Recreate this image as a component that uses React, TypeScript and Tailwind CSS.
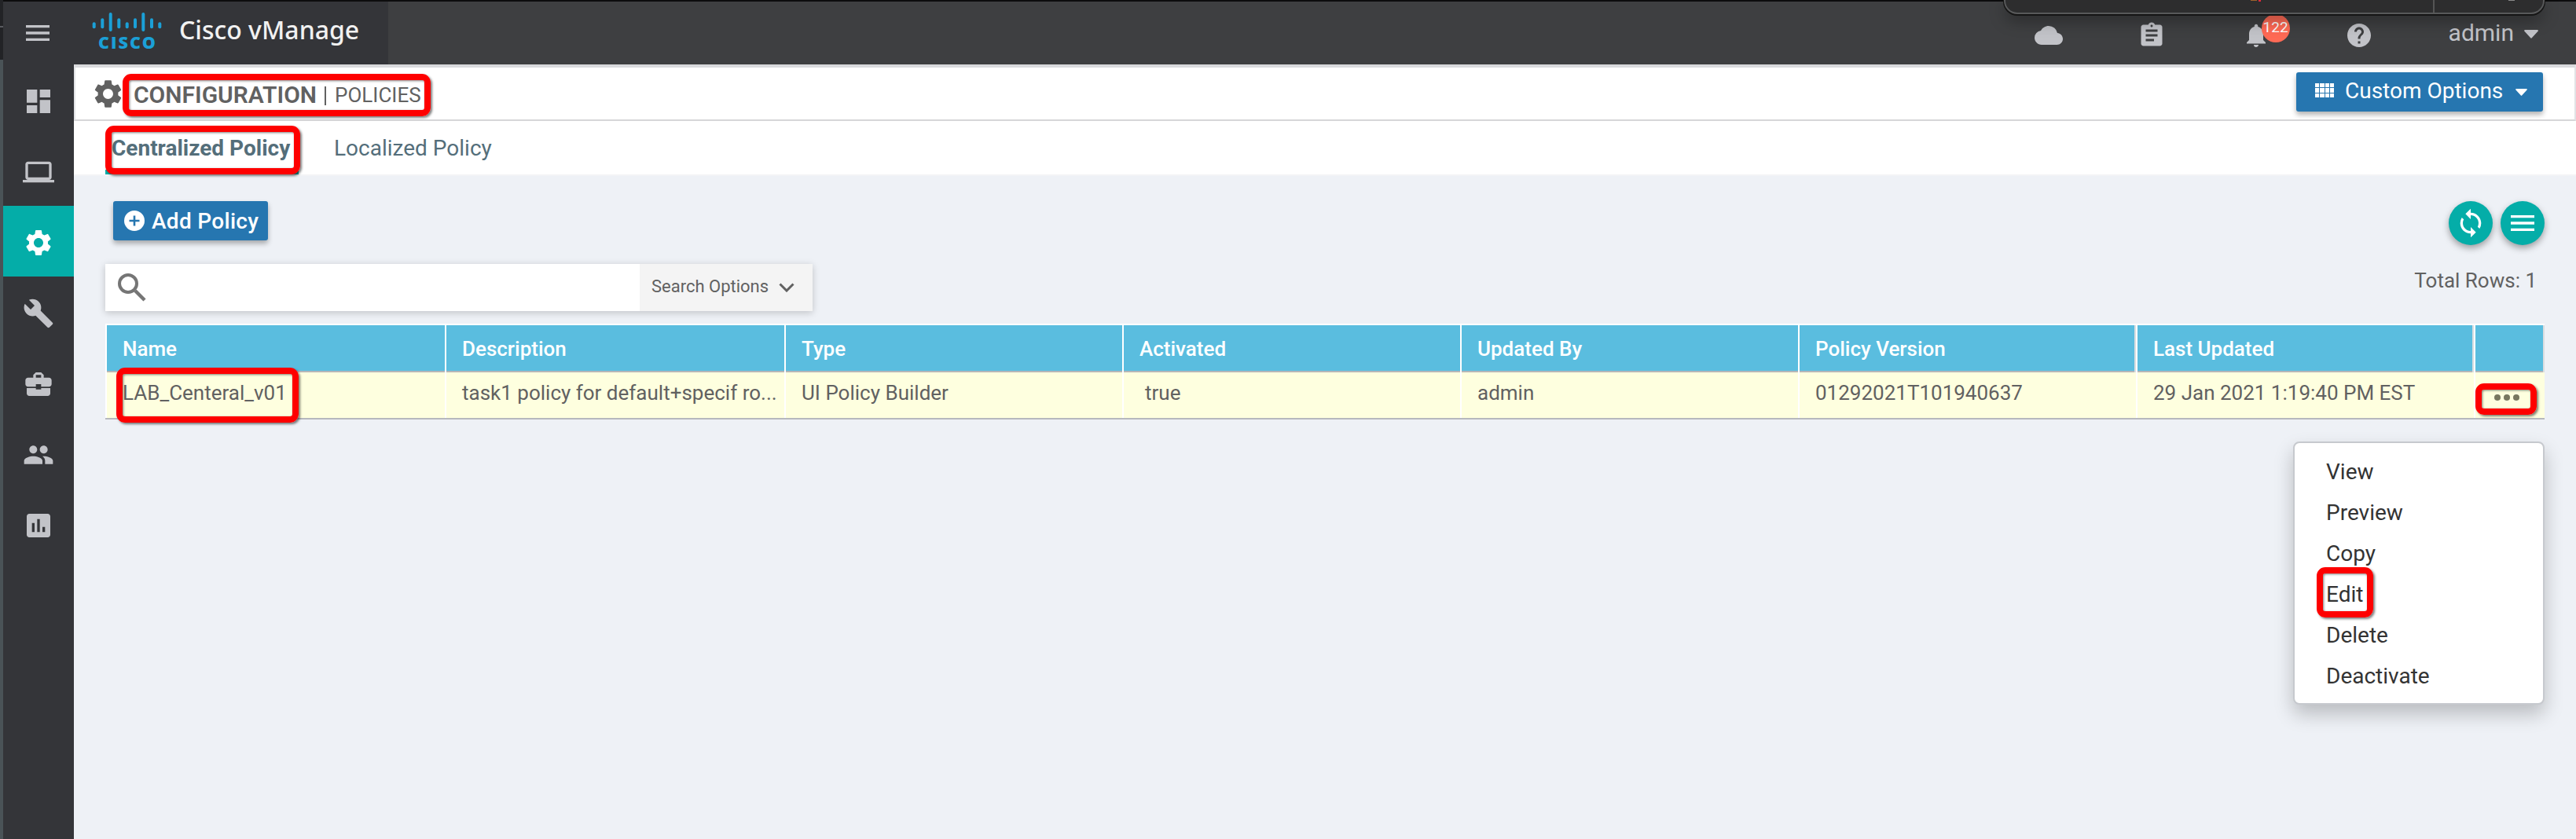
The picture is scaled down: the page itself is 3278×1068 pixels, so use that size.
import React from "react";
import {
  MdMenu, MdDashboard, MdLaptop, MdSettings, MdBuild, MdBusinessCenter, MdPeople, MdAssessment,
  MdCloud, MdAssignment, MdNotifications, MdHelp, MdSync,
} from "react-icons/md";

const Mark = ({ className }: { className: string }) => (
  <div className={"pointer-events-none absolute rounded-[11px] border-8 border-[#fe0000] shadow-[2px_2px_3px_rgba(0,0,0,0.5),inset_1px_1px_3px_rgba(0,0,0,0.5)] " + className} />
);

const Caret = ({ className }: { className: string }) => (
  <svg viewBox="0 0 18 11" className={className} fill="currentColor"><path d="M1 0h16q1.500 .5 .6 1.800L10 10q-1 1.300-2 0L.4 1.800Q-.5 .5 1 0z" /></svg>
);

// x, top and bottom of each bar in the logo
const bars = [
  [1.7, 16.3, 20.3], [12.3, 11.3, 20.3], [22.7, 4, 24], [33.3, 11.3, 20.3], [43.7, 16.3, 20.3],
  [54, 11.3, 20.3], [64.3, 4, 24], [75, 11.3, 20.3], [85.3, 16.3, 20.3],
];

const nav = [MdDashboard, MdLaptop, MdSettings, MdBuild, MdBusinessCenter, MdPeople, MdAssessment];

const columns = [
  { title: "Name", value: "LAB_Centeral_v01" },
  { title: "Description", value: "task1 policy for default+specif ro..." },
  { title: "Type", value: "UI Policy Builder" },
  { title: "Activated", value: "true" },
  { title: "Updated By", value: "admin" },
  { title: "Policy Version", value: "01292021T101940637" },
  { title: "Last Updated", value: "29 Jan 2021 1:19:40 PM EST" },
];

const actions = ["View", "Preview", "Copy", "Edit", "Delete", "Deactivate"];

function Logo() {
  return (
    <svg viewBox="0 0 88 60" className="h-[60px] w-[88px] shrink-0 overflow-visible">
      <g stroke="#1ba0d7" strokeWidth="4" strokeLinecap="round">
        {bars.map(([x, a, b]) => <line key={x} x1={x} x2={x} y1={a} y2={b} />)}
      </g>
      <text x="7" y="47.700" textLength="73" fontSize="21.500" fontWeight="800" fontFamily="'Open Sans', sans-serif" fill="#1ba0d7">CISCO</text>
    </svg>
  );
}

export default function App() {
  return (
    <div className="relative flex h-[1068px] w-[3278px] overflow-hidden bg-[#eef1f6] font-['Roboto',sans-serif] text-[#616161]">
      <div className="flex w-1 shrink-0 flex-col bg-[#4a5357]">
        <div className="h-[33px] bg-[#222326]" />
        <div className="h-[2px] bg-[#5a5c60]" />
        <div className="h-[41px] bg-[#222326]" />
      </div>
      <aside className="flex w-[90px] shrink-0 flex-col border-t-2 border-[#0c0c0d] bg-[#343539] text-[#c2c3c8]">
        <div className="flex h-20 items-center justify-center pr-[2px]"><MdMenu className="size-10" /></div>
        {nav.map((Icon, i) => (
          <div key={i} className={i === 2 ? "flex h-[90px] items-center justify-center bg-[#04ada8] pt-1 text-white" : "flex h-[90px] items-center justify-center pt-1"}>
            <Icon className="size-10" />
          </div>
        ))}
      </aside>

      <div className="flex min-w-0 flex-1 flex-col">
        <header className="flex h-[82px] shrink-0 border-t-2 border-[#0c0c0d] bg-[#3e3f41] text-[#c2c3c8]">
          <div className="flex w-[400px] items-start bg-[#343539] pl-6 pt-3">
            <Logo />
            <span className="ml-[22px] whitespace-nowrap font-['Noto_Sans',sans-serif] text-[32px] font-medium leading-[48px] text-[#f1f1f1]">Cisco vManage</span>
          </div>
          <div className="flex flex-1 items-center justify-end pr-[48px] pt-[6px]">
            <MdCloud className="mr-[95px] size-9" />
            <MdAssignment className="mr-[97px] size-9" />
            <div className="relative mr-[95px]">
              <MdNotifications className="size-9" />
              <span className="absolute left-[25px] top-[-9px] flex size-9 items-center justify-center rounded-full bg-[#ff6a55] pb-[2px] text-[19px] text-white">122</span>
            </div>
            <MdHelp className="mr-[96px] size-9" />
            <span className="relative -top-[3px] text-[30px] leading-9">admin</span>
            <Caret className="relative -top-[2px] ml-[13px] h-[11px] w-[18px]" />
          </div>
        </header>

        <section className="flex h-[72px] shrink-0 items-start justify-between border-x-2 border-b-2 border-t-4 border-x-[#e2e3e6] border-b-[#d6d6d8] border-t-[#d9dadd] bg-white pl-5 pr-10">
          <div className="flex h-[66px] items-center">
            <MdSettings className="size-[43px]" />
            <span className="ml-[11px] pt-[2px] text-[30px] font-semibold">CONFIGURATION</span>
            <span className="ml-[10px] mt-[6px] h-6 w-[2px] bg-[#616161]" />
            <span className="ml-[11px] pt-[4px] text-[26px]">POLICIES</span>
          </div>
          <button className="mt-[6px] flex h-[50px] w-[314px] items-center rounded-[3px] bg-[#2676b0] pl-6 text-[28px] text-white shadow-[0_4px_6px_rgba(0,0,0,0.3)]">
            <span className="mb-[4px] grid h-[18px] w-6 grid-cols-4 gap-[1px]">
              {Array.from({ length: 12 }, (_, i) => <i key={i} className="bg-white" />)}
            </span>
            <span className="mb-[3px] ml-[14px] whitespace-nowrap">Custom Options</span>
            <Caret className="ml-[16px] h-[9px] w-[15px]" />
          </button>
        </section>

        <nav className="flex h-[70px] shrink-0 border-b-2 border-[#f3f4f6] bg-white pl-10 text-[28px] leading-[70px] text-[#546e7a]">
          <div className="h-[68px] w-[246px] border-b-[6px] border-[#04ada8] pl-2 font-bold">Centralized Policy</div>
          <div className="ml-[45px]">Localized Policy</div>
        </nav>

        <main className="flex flex-1 flex-col pl-10 pr-10">
          <div className="mt-8 flex items-start justify-between">
            <button className="ml-[10px] flex h-[50px] w-[197px] items-center rounded-[3px] bg-[#2676b0] pl-[14px] text-[28px] font-medium text-white shadow-[0_4px_6px_rgba(0,0,0,0.3)]">
              <svg viewBox="0 0 26 26" className="size-[26px]"><circle cx="13" cy="13" r="13" fill="white" /><path d="M13 6.500v13M6.500 13h13" stroke="#2676b0" strokeWidth="2.600" /></svg>
              <span className="ml-[9px] whitespace-nowrap pt-[2px] tracking-[0.3px]">Add Policy</span>
            </button>
            <div className="flex gap-[10px] text-white">
              <div className="flex size-14 items-center justify-center rounded-full bg-[#04ada8] shadow-[0_4px_9px_rgba(0,0,0,0.35)]"><MdSync className="size-10" /></div>
              <div className="flex size-14 items-center justify-center rounded-full bg-[#04ada8] shadow-[0_4px_9px_rgba(0,0,0,0.35)]"><MdMenu className="size-10" /></div>
            </div>
          </div>
          <div className="mt-6 flex justify-between">
            <div className="flex h-[60px] w-[900px] bg-white shadow-[0_2px_9px_rgba(0,0,0,0.2)]">
              <svg viewBox="0 0 36 36" className="ml-4 mt-3 size-[36px]" fill="none" stroke="#757575" strokeWidth="4"><circle cx="13" cy="13" r="11" /><path d="M22 22l12 12" strokeWidth="4.500" /></svg>
              <div className="ml-auto flex w-[220px] items-center bg-[#f4f4f4] pl-[15px] text-[22px]">
                <span className="relative -top-[2px] whitespace-nowrap">Search Options</span>
                <svg viewBox="0 0 20 12" className="ml-[13px] h-3 w-5" fill="none" stroke="currentColor" strokeWidth="3"><path d="M1.500 1.500L10 10l8.500-8.500" /></svg>
              </div>
            </div>
            <div className="mr-[10px] pt-[6px] text-[26px] leading-[30px]">Total Rows: 1</div>
          </div>

          <div className="mt-4 grid h-[62px] w-[3104px] grid-cols-[434px_432px_430px_430px_430px_430px_430px_88px] border-b-2 border-t-2 border-b-[#b6b6b8] border-t-white bg-[#5abddf] text-[26px] font-medium leading-[60px] text-white">
            {columns.map((c) => (
              <div key={c.title} className="border-r-2 border-white pl-5 nth-[1]:border-l-2 nth-[n+6]:shadow-[inset_-2px_0_0_#dadde0]">{c.title}</div>
            ))}
            <div className="border-r-2 border-[#dadde0]" />
          </div>
          <div className="grid h-[60px] w-[3104px] grid-cols-[434px_432px_430px_430px_430px_430px_430px_88px] border-b-2 border-[#b6b8bd] bg-[#feffdf] text-[26px] leading-[52px]">
            {columns.map((c) => (
              <div key={c.title} className="overflow-hidden whitespace-nowrap border-r-2 border-white pl-5 nth-[1]:border-l-2 nth-[4]:pl-[27px]">{c.value}</div>
            ))}
            <div className="flex justify-center gap-1 pr-[8px] pt-[28px]">
              {[0, 1, 2].map((i) => <i key={i} className="size-2 rounded-full bg-[#77775f]" />)}
            </div>
          </div>
        </main>
      </div>

      <div className="absolute left-[2918px] top-[562px] flex h-[335px] w-[320px] flex-col rounded-[8px] border-2 border-[#c6c9ce] bg-white pt-[11px] text-[28px] leading-[52px] text-[#333] shadow-[0_12px_24px_rgba(0,0,0,0.22)]">
        {actions.map((a) => <div key={a} className="pl-10">{a}</div>)}
      </div>

      <div className="absolute left-[2550px] top-0 flex h-[18px] w-[688px] rounded-b-[17px] border-2 border-t-0 border-[#58595a] bg-[#2d2d2e] shadow-[0_1px_0_1px_#151515,0_8px_20px_rgba(0,0,0,0.35)]">
        <div className="ml-[312px] h-px w-2 bg-[#a0622a]" />
        <div className="ml-[2px] h-[2px] w-[3px] bg-[#e0283c]" />
        <div className="ml-auto w-[2px] bg-[#555]" />
        <div className="ml-[94px] mr-[36px] h-px w-2 bg-[#8a8a8a]" />
      </div>

      <Mark className="left-[156px] top-[94px] h-[54px] w-[392px]" />
      <Mark className="left-[134px] top-[160px] h-[62px] w-[248px]" />
      <Mark className="left-[148px] top-[468px] h-[70px] w-[232px]" />
      <Mark className="left-[3150px] top-[488px] h-10 w-[78px]" />
      <Mark className="left-[2948px] top-[722px] h-16 w-[72px]" />
    </div>
  );
}
